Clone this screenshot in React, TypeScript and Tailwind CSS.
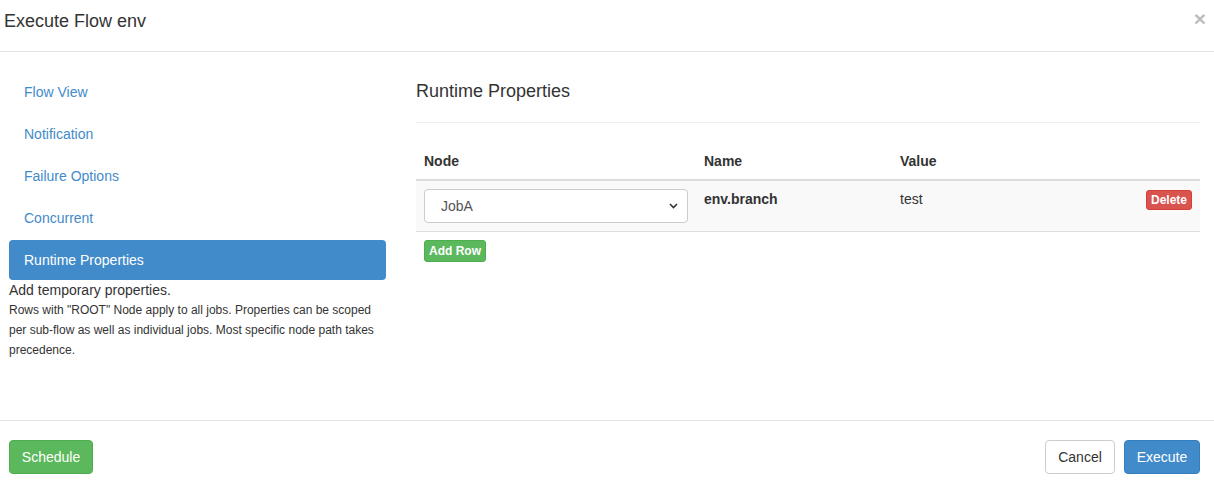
import React from 'react';

const navItems = ['Flow View', 'Notification', 'Failure Options', 'Concurrent', 'Runtime Properties'];

export default function App() {
  const active = 'Runtime Properties';

  return (
    <div className="w-[1214px] h-[480px] bg-white text-[#333] text-[14px] leading-[20px] font-['Liberation_Sans',Arial,sans-serif]">
      {/* header */}
      <div className="h-[52px] border-b border-[#e5e5e5] flex justify-between pl-[4px] pr-[8px]">
        <h4 className="pt-[9px] text-[18px] leading-[25px] text-[#333]">Execute Flow env</h4>
        <button className="text-[21px] font-bold leading-[21px] text-[#bdbdbd] pt-[8px] h-fit">×</button>
      </div>

      {/* body */}
      <div className="h-[368px] flex pl-[9px] pr-[14px] gap-[30px]">
        <div className="w-[377px] pt-[20px] shrink-0">
          <ul className="flex flex-col gap-[2px]">
            {navItems.map((item) => (
              <li key={item}>
                <a
                  className={`block px-[15px] py-[10px] rounded-[4px] ${
                    item === active ? 'bg-[#428bca] text-white' : 'text-[#428bca]'
                  }`}
                >
                  {item}
                </a>
              </li>
            ))}
          </ul>
          <p className="text-[14px] leading-[20px]">Add temporary properties.</p>
          <p className="text-[12px] leading-[20px]">
            Rows with "ROOT" Node apply to all jobs. Properties can be scoped per sub-flow as well as individual jobs. Most specific node path takes precedence.
          </p>
        </div>

        <div className="flex-1 pt-[26px]">
          <h3 className="text-[18px] leading-[26px] text-[#333]">Runtime Properties</h3>
          <div className="mt-[18px] border-t border-[#eee]" />
          <table className="mt-[20px] w-full border-collapse text-left">
            <thead>
              <tr className="border-b-2 border-[#ddd]">
                <th className="w-[280px] p-[8px] font-bold">Node</th>
                <th className="w-[196px] p-[8px] font-bold">Name</th>
                <th className="w-[200px] p-[8px] font-bold">Value</th>
                <th className="p-[8px]" />
              </tr>
            </thead>
            <tbody>
              <tr className="bg-[#f9f9f9] border-b border-[#ddd]">
                <td className="p-[8px] align-top">
                  <div className="h-[34px] bg-white border border-[#ccc] rounded-[4px] flex items-center justify-between pl-[16px] pr-[9px] text-[#555]">
                    <span>JobA</span>
                    <svg width="9" height="6" viewBox="0 0 9 6" fill="none">
                      <path d="M1 1l3.5 3.5L8 1" stroke="#333" strokeWidth="1.6" />
                    </svg>
                  </div>
                </td>
                <td className="p-[8px] align-top font-bold">env.branch</td>
                <td className="p-[8px] align-top">test</td>
                <td className="p-[8px] align-top text-right">
                  <button className="h-[20px] px-[4px] mt-[1px] rounded-[3px] bg-[#d9534f] border border-[#d43f3a] text-white text-[12px] leading-[16px] font-bold">
                    Delete
                  </button>
                </td>
              </tr>
            </tbody>
          </table>
          <button className="mt-[8px] ml-[8px] h-[22px] px-[4px] rounded-[3px] bg-[#5cb85c] border border-[#4cae4c] text-white text-[12px] leading-[18px] font-bold">
            Add Row
          </button>
        </div>
      </div>

      {/* footer */}
      <div className="border-t border-[#e5e5e5] flex justify-between items-start pt-[19px] pl-[9px] pr-[14px]">
        <button className="h-[34px] w-[84px] rounded-[4px] bg-[#5cb85c] border border-[#4cae4c] text-white">Schedule</button>
        <div className="flex gap-[9px]">
          <button className="h-[34px] w-[70px] rounded-[4px] bg-white border border-[#ccc] text-[#333]">Cancel</button>
          <button className="h-[34px] w-[76px] rounded-[4px] bg-[#428bca] border border-[#357ebd] text-white">Execute</button>
        </div>
      </div>
    </div>
  );
}
